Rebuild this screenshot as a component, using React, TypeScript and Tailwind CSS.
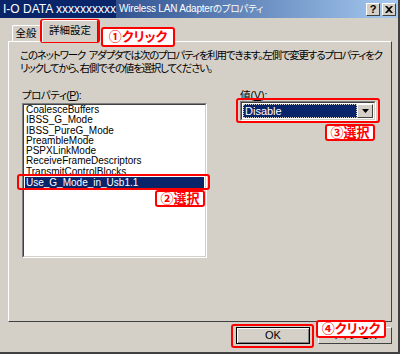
const JP = "font-['Liberation_Sans','Noto_Sans_CJK_JP',sans-serif]";

const items = [
  "CoalesceBuffers",
  "IBSS_G_Mode",
  "IBSS_PureG_Mode",
  "PreambleMode",
  "PSPXLinkMode",
  "ReceiveFrameDescriptors",
  "TransmitControlBlocks",
  "Use_G_Mode_in_Usb1.1",
];

function Callout({ text, className }: { text: string; className: string }) {
  return (
    <div
      className={`absolute flex items-center justify-center rounded-[3px] border-2 border-[#ff0000] bg-white font-bold text-[13px] text-[#ff0000] [font-feature-settings:'palt'] ${className}`}
    >
      {text}
    </div>
  );
}

function RedBox({ className }: { className: string }) {
  return <div className={`absolute rounded-[3px] border-2 border-[#ff0000] ${className}`} />;
}

export default function App() {
  return (
    <div
      className={`relative h-[354px] w-[400px] overflow-hidden border-b-2 border-r-2 border-[#404040] bg-[#d4d0c8] text-black ${JP}`}
    >
      {/* title bar */}
      <div className="flex h-[18px] items-center bg-gradient-to-r from-[#0a246a] to-[#a6caf0] text-white">
        <div className="flex h-full w-[116px] items-center bg-[#0a246a] pl-[3px] text-[12px] whitespace-nowrap">
          I-O DATA xxxxxxxxxx
        </div>
        <div className="ml-[3px] text-[10px] tracking-[-0.2px] whitespace-nowrap [font-feature-settings:'palt']">
          Wireless LAN Adapter<span className="text-[9.5px]">のプロパティ</span>
        </div>
        <div className="ml-auto mr-[2px] flex gap-[2px]">
          <div className="flex h-[13px] w-[14px] items-center justify-center border border-b-[#404040] border-l-white border-r-[#404040] border-t-white bg-[#d4d0c8] text-[11px] font-bold leading-none text-black">
            ?
          </div>
          <div className="flex h-[13px] w-[14px] items-center justify-center border border-b-[#404040] border-l-white border-r-[#404040] border-t-white bg-[#d4d0c8] text-black">
            <svg width="8" height="7" viewBox="0 0 8 7">
              <path d="M0 0h2l2 2 2-2h2L5 3.5 8 7H6L4 5 2 7H0l3-3.5z" fill="#000" />
            </svg>
          </div>
        </div>
      </div>

      {/* tabs */}
      <div className="flex h-[23px] items-end pl-[12px] text-[10.5px] [font-feature-settings:'palt']">
        <div className="flex h-[16px] w-[30px] items-center justify-center rounded-t-[2px] border-l border-r border-t border-l-white border-r-[#404040] border-t-white pr-[2px]">
          全般
        </div>
        <div className="relative z-10 -mb-px flex h-[22px] w-[56px] items-center justify-center rounded-t-[2px] border-l border-r border-t border-l-white border-r-[#404040] border-t-white bg-[#d4d0c8] pb-[2px]">
          詳細設定
        </div>
      </div>

      {/* panel */}
      <div className="ml-[8px] flex h-[281px] w-[384px] flex-col border border-b-[#404040] border-l-white border-r-[#404040] border-t-white">
        <div className="mt-[7px] ml-[11px] text-[10.5px] leading-[13px] tracking-[-1.2px] whitespace-nowrap [font-feature-settings:'palt']">
          <div>このネットワーク&nbsp;&nbsp;アダプタでは次のプロパティを利用できます。左側で変更するプロパティをク</div>
          <div>リックしてから、右側でその値を選択してください。</div>
        </div>

        <div className="mt-[14px] flex">
          <div className="ml-[13px] flex flex-col">
            <div className="h-[12px] text-[10.5px] leading-[12px] tracking-[-0.5px] [font-feature-settings:'palt']">
              プロパティ(<span className="underline">P</span>):
            </div>
            <div className="mt-[2px] h-[155px] w-[185px] border border-b-white border-l-[#808080] border-r-white border-t-[#808080]">
              <div className="h-full w-full border border-b-[#d4d0c8] border-l-[#404040] border-r-[#d4d0c8] border-t-[#404040] bg-white pl-[1px] pr-[1px]">
                {items.map((it, i) => (
                  <div
                    key={it}
                    className={`pl-[1px] text-[10px] whitespace-nowrap ${
                      i === items.length - 1
                        ? "h-[11px] bg-[#0a246a] leading-[11px] text-white"
                        : "h-[10.3px] leading-[10.3px]"
                    }`}
                  >
                    {it}
                  </div>
                ))}
              </div>
            </div>
          </div>

          <div className="ml-[33px] flex flex-col">
            <div className="h-[12px] text-[10.5px] leading-[12px] [font-feature-settings:'palt']">
              値(<span className="underline">V</span>):
            </div>
            <div className="flex h-[20px] w-[136px] border border-b-white border-l-[#808080] border-r-white border-t-[#808080]">
              <div className="flex flex-1 border border-b-[#d4d0c8] border-l-[#404040] border-r-[#d4d0c8] border-t-[#404040] bg-white p-[1px]">
                <div className="flex flex-1 items-center border border-dotted border-[#d4d0c8] bg-[#0a246a] pl-[1px] text-[11px] text-white">
                  Disable
                </div>
                <div className="flex w-[16px] items-center justify-center border border-b-[#404040] border-l-white border-r-[#404040] border-t-white bg-[#d4d0c8]">
                  <svg width="7" height="4" viewBox="0 0 7 4">
                    <path d="M0 0h7L3.5 4z" fill="#000" />
                  </svg>
                </div>
              </div>
            </div>
          </div>
        </div>
      </div>

      {/* buttons */}
      <div className="mt-[5px] flex pl-[236px] text-[11px]">
        <div className="flex h-[17px] w-[74px] items-center justify-center border border-black bg-[#d4d0c8] shadow-[inset_1px_1px_0_#fff,inset_-1px_-1px_0_#808080]">
          OK
        </div>
        <div className="ml-[8px] flex h-[17px] w-[74px] items-center justify-center border border-b-[#404040] border-l-white border-r-[#404040] border-t-white bg-[#d4d0c8] [font-feature-settings:'palt']">
          キャンセル
        </div>
      </div>

      {/* annotations */}
      <RedBox className="left-[40px] top-[19px] h-[24px] w-[60px]" />
      <Callout text="①クリック" className="left-[101px] top-[27px] h-[20px] w-[74px]" />

      <RedBox className="left-[17px] top-[174px] h-[16px] w-[193px]" />
      <Callout text="②選択" className="left-[155px] top-[190px] h-[17px] w-[50px]" />

      <RedBox className="left-[236px] top-[98px] h-[25px] w-[144px]" />
      <Callout text="③選択" className="left-[325px] top-[124px] h-[17px] w-[50px]" />

      <RedBox className="left-[231px] top-[324px] h-[24px] w-[83px]" />
      <Callout text="④クリック" className="left-[316px] top-[320px] h-[18px] w-[70px]" />
    </div>
  );
}
